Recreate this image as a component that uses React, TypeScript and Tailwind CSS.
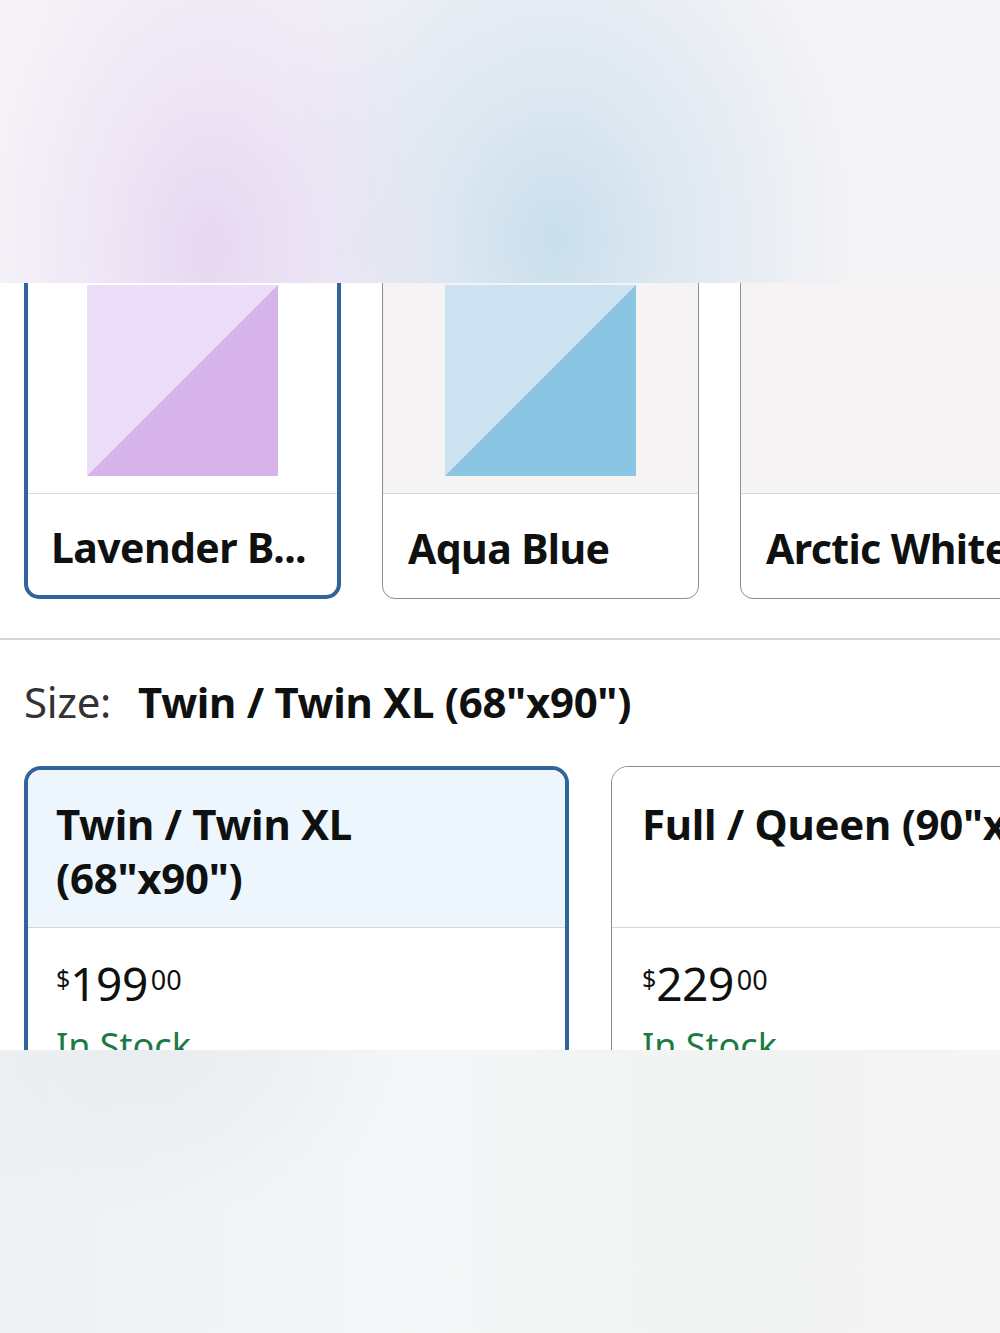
import React from 'react'

type Swatch = { name: string; light?: string; dark?: string; selected?: boolean }

const COLORS: Swatch[] = [
  { name: 'Lavender B...', light: '#ecdef8', dark: '#d7b3ec', selected: true },
  { name: 'Aqua Blue', light: '#cce2f0', dark: '#8cc4e4' },
  { name: 'Arctic White' },
]

type SizeOption = { title: string[]; price: string; selected?: boolean }

const SIZES: SizeOption[] = [
  { title: ['Twin / Twin XL', '(68"x90")'], price: '199', selected: true },
  { title: ['Full / Queen (90"x90")'], price: '229' },
]

const font = "font-['Noto_Sans',sans-serif]"

const SwatchSquare = ({ light, dark }: { light: string; dark: string }) => (
  <svg width="191" height="191" viewBox="0 0 191 191" className="block">
    <rect width="191" height="191" fill={light} />
    <polygon points="0,191 191,0 191,191" fill={dark} />
  </svg>
)

const ColorCard = ({ swatch }: { swatch: Swatch }) => {
  const sel = swatch.selected
  return (
    <div
      className={`w-[317px] shrink-0 overflow-hidden ${
        sel
          ? 'rounded-[15px] border-4 border-[#30649b]'
          : 'rounded-[13px] border-[1.5px] border-[#8d8d8d]'
      }`}
    >
      <div
        className={`flex justify-center ${
          sel ? 'h-[236px] bg-white pt-[28px]' : 'h-[238.5px] bg-[#f6f3f5] pt-[30.5px]'
        }`}
      >
        {swatch.light && swatch.dark && <SwatchSquare light={swatch.light} dark={swatch.dark} />}
      </div>
      <div
        className={`flex items-center border-t border-[#d9d9d9] pt-[6px] whitespace-nowrap text-[41px] font-bold tracking-[-0.6px] text-[#0f1111] ${
          sel ? 'h-[102px] px-[23px]' : 'h-[104.5px] px-[25px]'
        }`}
      >
        {swatch.name}
      </div>
    </div>
  )
}

const SizeCard = ({ option }: { option: SizeOption }) => {
  const sel = option.selected
  return (
    <div
      className={`w-[545px] shrink-0 overflow-hidden rounded-t-[17px] ${
        sel ? 'border-4 border-[#30649b]' : 'border-[1.5px] border-[#8d8d8d]'
      }`}
    >
      <div
        className={`border-b border-[#d6d6d6] text-[42px] font-bold leading-[54px] tracking-[-0.3px] text-[#0f1111] ${
          sel ? 'h-[158px] bg-[#edf6fd] px-[28px] pt-[27px]' : 'h-[160.5px] bg-white px-[30px] pt-[29.5px]'
        }`}
      >
        {option.title.map((line) => (
          <div key={line} className="whitespace-nowrap">
            {line}
          </div>
        ))}
      </div>
      <div className={`${sel ? 'px-[28px]' : 'px-[30px]'} pt-[32px] pb-[40px]`}>
        <div className="flex items-start leading-none text-[#0f1111]">
          <span className="mt-[6px] text-[25px]">$</span>
          <span className="text-[46px] tracking-[-0.5px]">{option.price}</span>
          <span className="mt-[6px] ml-[3px] text-[27px]">00</span>
        </div>
        <div className="mt-[22px] text-[36px] leading-none text-[#1b7a45]">In Stock</div>
      </div>
    </div>
  )
}

export default function App() {
  return (
    <div className={`flex min-h-[1333px] w-[1000px] flex-col ${font}`}>
      {/* soft backdrop over the top */}
      <div className="h-[283px] shrink-0 bg-[radial-gradient(ellipse_240px_380px_at_210px_250px,rgba(230,215,242,1)_0%,rgba(234,221,244,0.6)_45%,rgba(234,221,244,0)_100%),radial-gradient(ellipse_300px_390px_at_555px_240px,rgba(201,222,236,1)_0%,rgba(208,226,239,0.6)_40%,rgba(208,226,239,0)_100%),linear-gradient(to_right,#f6f4f8,#f2f1f6_45%,#f4f3f5_80%,#f4f3f5)]" />

      <div className="h-[767px] shrink-0 overflow-hidden bg-white">
        <div className="-mt-[30px] flex gap-[41px] pl-[24px]">
          {COLORS.map((c) => (
            <ColorCard key={c.name} swatch={c} />
          ))}
        </div>

        <div className="mt-[39px] h-[2px] bg-[#d6d6d6]" />

        <div className="mt-[35px] flex h-[52px] items-center whitespace-nowrap px-[24px] text-[42px] tracking-[-0.3px] text-[#0f1111]">
          <span className="text-[#333]">Size:</span>
          <span className="ml-[27px] font-bold">Twin / Twin XL (68"x90")</span>
        </div>

        <div className="mt-[39px] flex gap-[42px] pl-[24px]">
          {SIZES.map((s) => (
            <SizeCard key={s.price} option={s} />
          ))}
        </div>
      </div>

      {/* soft backdrop below */}
      <div className="flex-1 bg-[radial-gradient(ellipse_260px_240px_at_390px_1333px,#fafbfb_0%,rgba(250,251,251,0)_100%),radial-gradient(ellipse_260px_170px_at_150px_0px,#e8edf1_0%,rgba(232,237,241,0)_100%),linear-gradient(to_right,#eef0f1,#f5f6f7_40%,#f1f2f2_75%,#f5f5f5)]" />
    </div>
  )
}
